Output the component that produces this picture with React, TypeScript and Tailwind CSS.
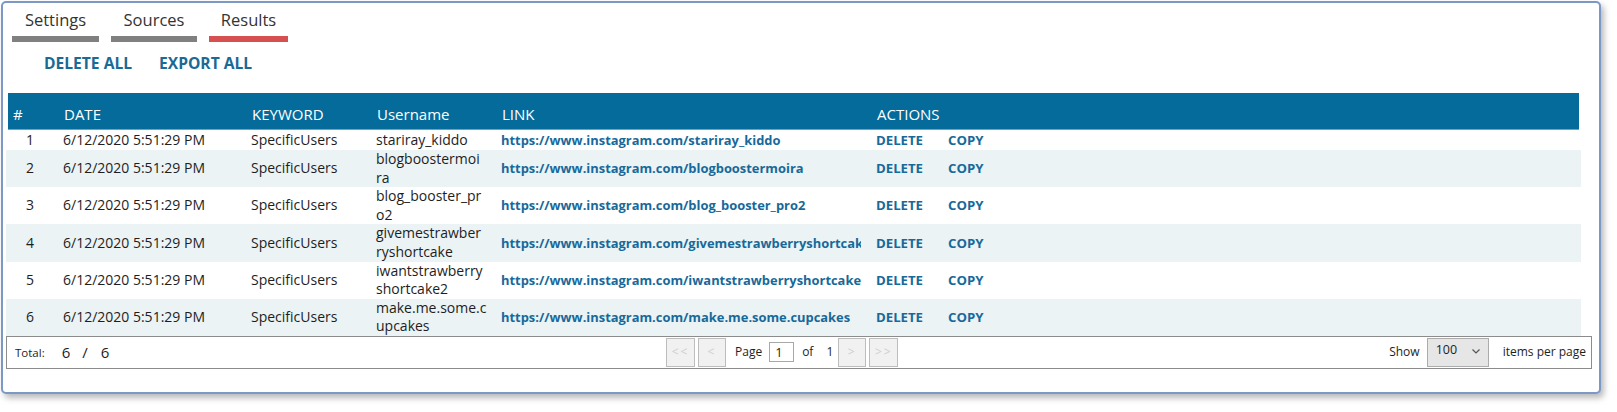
import React from "react";

type Row = {
  id: number;
  date: string;
  keyword: string;
  username: string[];
  link: string;
};

const ROWS: Row[] = [
  { id: 1, date: "6/12/2020 5:51:29 PM", keyword: "SpecificUsers", username: ["stariray_kiddo"], link: "https://www.instagram.com/stariray_kiddo" },
  { id: 2, date: "6/12/2020 5:51:29 PM", keyword: "SpecificUsers", username: ["blogboostermoi", "ra"], link: "https://www.instagram.com/blogboostermoira" },
  { id: 3, date: "6/12/2020 5:51:29 PM", keyword: "SpecificUsers", username: ["blog_booster_pr", "o2"], link: "https://www.instagram.com/blog_booster_pro2" },
  { id: 4, date: "6/12/2020 5:51:29 PM", keyword: "SpecificUsers", username: ["givemestrawber", "ryshortcake"], link: "https://www.instagram.com/givemestrawberryshortcake" },
  { id: 5, date: "6/12/2020 5:51:29 PM", keyword: "SpecificUsers", username: ["iwantstrawberry", "shortcake2"], link: "https://www.instagram.com/iwantstrawberryshortcake2" },
  { id: 6, date: "6/12/2020 5:51:29 PM", keyword: "SpecificUsers", username: ["make.me.some.c", "upcakes"], link: "https://www.instagram.com/make.me.some.cupcakes" },
];

const TABS = [
  { label: "Settings", width: "w-[87px]", active: false },
  { label: "Sources", width: "w-[86px]", active: false },
  { label: "Results", width: "w-[79px]", active: true },
];

const GRID = "grid grid-cols-[51px_188px_125px_125px_375px_1fr]";

function PagerButton({ label, wide }: { label: string; wide?: boolean }) {
  return (
    <button
      type="button"
      className={`flex h-[29px] ${wide ? "w-[29px]" : "w-[28px]"} items-center justify-center border border-[#bdbdbd] bg-[#f1f1f1] text-[12px] tracking-[2px] text-[#cfcfcf]`}
    >
      {label}
    </button>
  );
}

export default function App() {
  return (
    <div className="h-[412px] w-[1617px] bg-white pl-px pt-px font-['Open_Sans',sans-serif] text-[#1e1e1e]">
      <div className="flex h-[393px] w-[1600px] flex-col rounded-[5px] border-2 border-[#7b98c6] bg-white shadow-[3px_4px_6px_rgba(0,0,0,0.28)]">
        {/* tabs */}
        <div className="flex gap-[12px] pl-[9px] pt-[6px]">
          {TABS.map((tab) => (
            <div key={tab.label} className={tab.width}>
              <div className="text-center text-[16.5px] leading-[22px] text-[#333]">{tab.label}</div>
              <div className={`mt-[5px] h-[6px] ${tab.active ? "bg-[#d6504f]" : "bg-[#808080]"}`} />
            </div>
          ))}
        </div>

        {/* bulk actions */}
        <div className="mt-[11px] flex gap-[27px] pl-[41px] text-[15.6px] font-bold leading-[20px] text-[#1a6a94]">
          <button type="button">DELETE ALL</button>
          <button type="button">EXPORT ALL</button>
        </div>

        {/* table */}
        <div className="ml-[3px] mr-[18px] mt-[20px]">
          <div className={`${GRID} mx-[2px] h-[37px] border-b border-[#6ea2c4] bg-[#046b9b] pt-[11px] text-[15px] leading-[20px] text-white`}>
            <div className="pl-[5px]">#</div>
            <div className="pl-[5px]">DATE</div>
            <div className="pl-[5px]">KEYWORD</div>
            <div className="pl-[5px]">Username</div>
            <div className="pl-[5px]">LINK</div>
            <div className="pl-[5px]">ACTIONS</div>
          </div>

          {ROWS.map((row, i) => (
            <div
              key={row.id}
              className={`${GRID} ${i === 0 ? "min-h-[20px]" : "min-h-[37.2px]"} items-center text-[14px] leading-[18.6px] ${i % 2 === 1 ? "bg-[#ebf3f5]" : "bg-white"}`}
            >
              <div className="pr-[3px] text-center">{row.id}</div>
              <div className="pl-[6px]">{row.date}</div>
              <div className="pl-[6px]">{row.keyword}</div>
              <div className="pl-[6px]">
                {row.username.map((line) => (
                  <div key={line}>{line}</div>
                ))}
              </div>
              <div className="pl-[6px] pr-[9px]">
                <div className="overflow-hidden whitespace-nowrap text-[12.9px] font-bold text-[#17699a]">{row.link}</div>
              </div>
              <div className="flex pl-[6px] text-[13.2px] font-bold text-[#17699a]">
                <span className="w-[72px]">DELETE</span>
                <span>COPY</span>
              </div>
            </div>
          ))}

          {/* pager */}
          <div className="flex h-[33px] w-[1586px] items-center border border-[#8c8c8c] bg-white">
            <div className="flex w-[659px] items-center pl-[8px]">
              <span className="text-[11.5px]">Total:</span>
              <span className="ml-[17px] text-[15px]">6</span>
              <span className="ml-[12px] text-[15px]">/</span>
              <span className="ml-[13px] text-[15px]">6</span>
            </div>
            <div className="flex items-center text-[12px]">
              <PagerButton label="<<" wide />
              <div className="ml-[3px]">
                <PagerButton label="<" />
              </div>
              <span className="ml-[9px]">Page</span>
              <div className="ml-[7px] flex h-[20px] w-[25px] items-center border border-[#a8a8a8] pl-[5px] text-[13px]">1</div>
              <span className="ml-[8px]">of</span>
              <span className="ml-[13px]">1</span>
              <div className="ml-[5px]">
                <PagerButton label=">" />
              </div>
              <div className="ml-[3px]">
                <PagerButton label=">>" wide />
              </div>
            </div>
            <div className="flex-1" />
            <div className="flex items-center pr-[5px] text-[12px]">
              <span>Show</span>
              <div className="ml-[7px] flex h-[29px] w-[62px] items-start justify-between border border-[#acacac] bg-[#e6e6e6] pl-[8px] pr-[8px] pt-[2px]">
                <span className="text-[12.5px] leading-[18px]">100</span>
                <svg width="8" height="5" viewBox="0 0 8 5" className="mt-[8px]">
                  <polyline points="0.5,0.5 4,4 7.5,0.5" fill="none" stroke="#555" strokeWidth="1.2" />
                </svg>
              </div>
              <span className="ml-[14px]">items per page</span>
            </div>
          </div>
        </div>
      </div>
    </div>
  );
}
